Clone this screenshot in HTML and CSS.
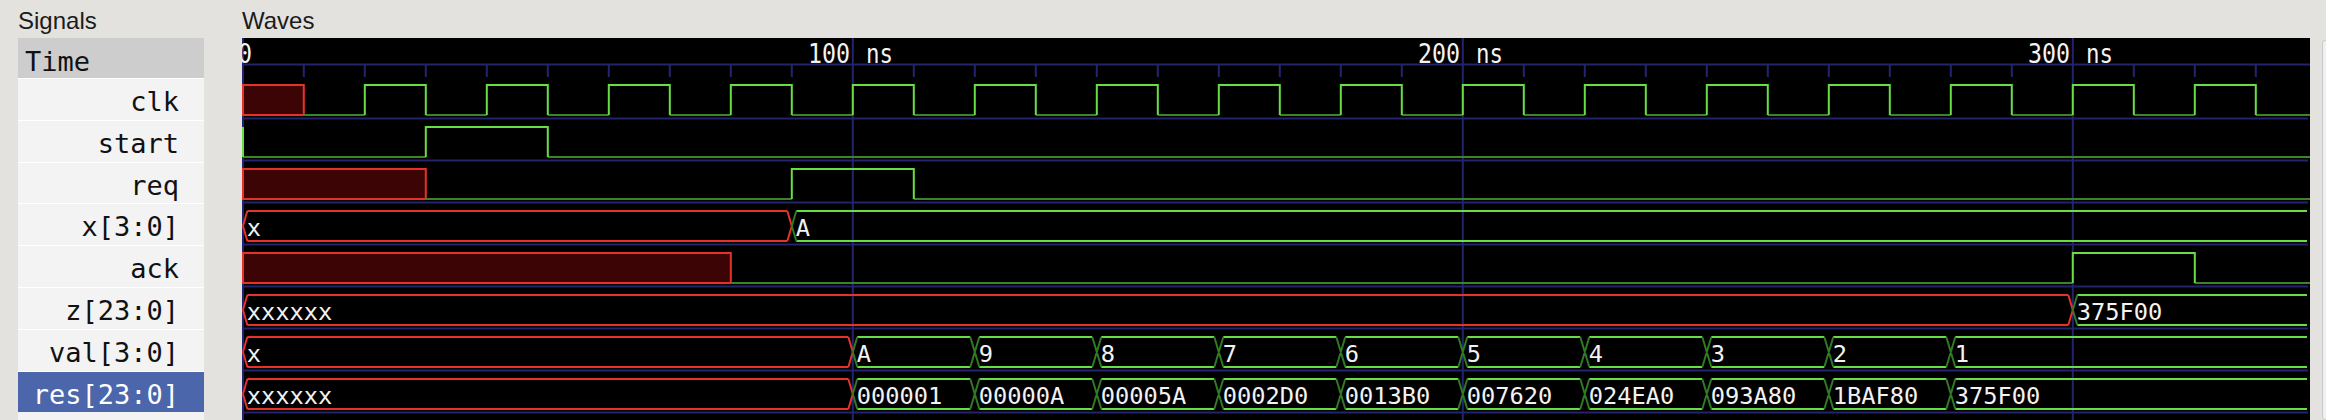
FILE: index.html
```html
<!DOCTYPE html>
<html lang="en">
<head>
<meta charset="utf-8">
<title>Waves</title>
<link rel="stylesheet" href="styles.css">
</head>
<body>
<div class="app">
  <section class="signals">
    <div class="pane-title">Signals</div>
    <div class="siglist">
      <div class="sig sig-time">Time</div>
      <div class="sig">clk</div>
      <div class="sig">start</div>
      <div class="sig">req</div>
      <div class="sig">x[3:0]</div>
      <div class="sig">ack</div>
      <div class="sig">z[23:0]</div>
      <div class="sig">val[3:0]</div>
      <div class="sig sig-selected">res[23:0]</div>
    </div>
  </section>
  <section class="waves">
    <div class="pane-title">Waves</div>
    <svg class="wavecanvas" viewBox="0 0 2068 382" width="2068" height="382" xmlns="http://www.w3.org/2000/svg">
      <defs>
        <g id="steps">
          <path class="red" d="M5.3 47H606.3M5.3 77H606.3M1 62L5.3 47M1 62L5.3 77M606.3 47L610.8 62M606.3 77L610.8 62"/>
          <path class="hi" d="M615.3 47H728.3M615.3 77H728.3M737.3 47H850.3M737.3 77H850.3M859.3 47H972.3M859.3 77H972.3M981.3 47H1094.3M981.3 77H1094.3M1103.3 47H1216.3M1103.3 77H1216.3M1225.3 47H1338.3M1225.3 77H1338.3M1347.3 47H1460.3M1347.3 77H1460.3M1469.3 47H1582.3M1469.3 77H1582.3M1591.3 47H1704.3M1591.3 77H1704.3M1713.3 47H2065M1713.3 77H2065"/>
          <path class="tr" d="M610.8 62L615.3 47M610.8 62L615.3 77M728.3 47L737.3 77M728.3 77L737.3 47M850.3 47L859.3 77M850.3 77L859.3 47M972.3 47L981.3 77M972.3 77L981.3 47M1094.3 47L1103.3 77M1094.3 77L1103.3 47M1216.3 47L1225.3 77M1216.3 77L1225.3 47M1338.3 47L1347.3 77M1338.3 77L1347.3 47M1460.3 47L1469.3 77M1460.3 77L1469.3 47M1582.3 47L1591.3 77M1582.3 77L1591.3 47M1704.3 47L1713.3 77M1704.3 77L1713.3 47"/>
        </g>
      </defs>

      <g class="grid">
        <path d="M0 26.5H2068"/>
        <path d="M0 80.5H2066M0 122.5H2066M0 164.5H2066M0 206.5H2066M0 248.5H2066M0 290.5H2066M0 332.5H2066M0 374.5H2066"/>
        <path d="M1 0V382M610.8 0V382M1220.8 0V382M1830.8 0V382"/>
        <path d="M61.8 26V39M122.8 26V39M183.8 26V39M244.8 26V39M305.8 26V39M366.8 26V39M427.8 26V39M488.8 26V39M549.8 26V39M671.8 26V39M732.8 26V39M793.8 26V39M854.8 26V39M915.8 26V39M976.8 26V39M1037.8 26V39M1098.8 26V39M1159.8 26V39M1281.8 26V39M1342.8 26V39M1403.8 26V39M1464.8 26V39M1525.8 26V39M1586.8 26V39M1647.8 26V39M1708.8 26V39M1769.8 26V39M1891.8 26V39M1952.8 26V39M2013.8 26V39"/>
      </g>

      <g class="ruler">
        <text x="-4" y="24.5" textLength="14" lengthAdjust="spacingAndGlyphs">0</text>
        <text x="566" y="24.5" textLength="42" lengthAdjust="spacingAndGlyphs">100</text>
        <text x="624" y="24.5" textLength="27" lengthAdjust="spacingAndGlyphs">ns</text>
        <text x="1176" y="24.5" textLength="42" lengthAdjust="spacingAndGlyphs">200</text>
        <text x="1234" y="24.5" textLength="27" lengthAdjust="spacingAndGlyphs">ns</text>
        <text x="1786" y="24.5" textLength="42" lengthAdjust="spacingAndGlyphs">300</text>
        <text x="1844" y="24.5" textLength="27" lengthAdjust="spacingAndGlyphs">ns</text>
      </g>

      <!-- clk -->
      <g>
        <rect class="xbox" x="1" y="47" width="60.8" height="30"/>
        <path class="lo clk-lo" d="M61.8 77H2068"/>
        <path class="hi" d="M122.8 77V47H183.8V77M244.8 77V47H305.8V77M366.8 77V47H427.8V77M488.8 77V47H549.8V77M610.8 77V47H671.8V77M732.8 77V47H793.8V77M854.8 77V47H915.8V77M976.8 77V47H1037.8V77M1098.8 77V47H1159.8V77M1220.8 77V47H1281.8V77M1342.8 77V47H1403.8V77M1464.8 77V47H1525.8V77M1586.8 77V47H1647.8V77M1708.8 77V47H1769.8V77M1830.8 77V47H1891.8V77M1952.8 77V47H2013.8V77"/>
      </g>

      <!-- start -->
      <g transform="translate(0 42)">
        <path class="lo" d="M1 77H183.8M305.8 77H2068"/>
        <path class="hi" d="M1 47V77M183.8 77V47H305.8V77"/>
      </g>

      <!-- req -->
      <g transform="translate(0 84)">
        <rect class="xbox" x="1" y="47" width="182.8" height="30"/>
        <path class="lo" d="M183.8 77H549.8M671.8 77H2068"/>
        <path class="hi" d="M549.8 77V47H671.8V77"/>
      </g>

      <!-- x[3:0] -->
      <g transform="translate(0 126)">
        <path class="red" d="M5.3 47H545.3M5.3 77H545.3M1 62L5.3 47M1 62L5.3 77M545.3 47L549.8 62M545.3 77L549.8 62"/>
        <path class="hi" d="M554.3 47H2065M554.3 77H2065"/>
        <path class="tr" d="M549.8 62L554.3 47M549.8 62L554.3 77"/>
        <text class="val" x="4.8" y="71.5">x</text>
        <text class="val" x="553.8" y="71.5">A</text>
      </g>

      <!-- ack -->
      <g transform="translate(0 168)">
        <rect class="xbox" x="1" y="47" width="487.8" height="30"/>
        <path class="lo" d="M488.8 77H1830.8M1952.8 77H2068"/>
        <path class="hi" d="M1830.8 77V47H1952.8V77"/>
      </g>

      <!-- z[23:0] -->
      <g transform="translate(0 210)">
        <path class="red" d="M5.3 47H1826.3M5.3 77H1826.3M1 62L5.3 47M1 62L5.3 77M1826.3 47L1830.8 62M1826.3 77L1830.8 62"/>
        <path class="hi" d="M1835.3 47H2065M1835.3 77H2065"/>
        <path class="tr" d="M1830.8 62L1835.3 47M1830.8 62L1835.3 77"/>
        <text class="val" x="4.8" y="71.5">xxxxxx</text>
        <text class="val" x="1834.8" y="71.5">375F00</text>
      </g>

      <!-- val[3:0] -->
      <g transform="translate(0 252)">
        <use href="#steps"/>
        <text class="val" x="4.8" y="71.5">x</text>
        <text class="val" x="614.8" y="71.5">A</text>
        <text class="val" x="736.8" y="71.5">9</text>
        <text class="val" x="858.8" y="71.5">8</text>
        <text class="val" x="980.8" y="71.5">7</text>
        <text class="val" x="1102.8" y="71.5">6</text>
        <text class="val" x="1224.8" y="71.5">5</text>
        <text class="val" x="1346.8" y="71.5">4</text>
        <text class="val" x="1468.8" y="71.5">3</text>
        <text class="val" x="1590.8" y="71.5">2</text>
        <text class="val" x="1712.8" y="71.5">1</text>
      </g>

      <!-- res[23:0] -->
      <g transform="translate(0 294)">
        <use href="#steps"/>
        <text class="val" x="4.8" y="71.5">xxxxxx</text>
        <text class="val" x="614.8" y="71.5">000001</text>
        <text class="val" x="736.8" y="71.5">00000A</text>
        <text class="val" x="858.8" y="71.5">00005A</text>
        <text class="val" x="980.8" y="71.5">0002D0</text>
        <text class="val" x="1102.8" y="71.5">0013B0</text>
        <text class="val" x="1224.8" y="71.5">007620</text>
        <text class="val" x="1346.8" y="71.5">024EA0</text>
        <text class="val" x="1468.8" y="71.5">093A80</text>
        <text class="val" x="1590.8" y="71.5">1BAF80</text>
        <text class="val" x="1712.8" y="71.5">375F00</text>
      </g>
    </svg>
  </section>
  <div class="vscroll"></div>
</div>
</body>
</html>
```

FILE: styles.css
```css
html, body {
  margin: 0;
  padding: 0;
}

body {
  background: #e3e2de;
  overflow: hidden;
  width: 2326px;
  height: 420px;
}

.app {
  display: flex;
  height: 420px;
  padding-left: 18px;
  overflow: hidden;
}

.signals {
  flex: 0 0 186px;
  display: flex;
  flex-direction: column;
}

.pane-title {
  height: 38px;
  box-sizing: border-box;
  padding-top: 3px;
  line-height: 35px;
  font-family: "Liberation Sans", Arial, sans-serif;
  font-size: 24px;
  color: #1b1b1b;
  white-space: nowrap;
}

.siglist {
  flex: 1;
  background: #f3f3f3;
  font-family: "DejaVu Sans Mono", monospace;
  font-size: 27px;
  color: #111;
}

.sig {
  height: 41.8px;
  box-sizing: border-box;
  border-top: 1.5px solid #ffffff;
  padding: 3px 25px 0 0;
  line-height: 40.3px;
  text-align: right;
  white-space: nowrap;
  overflow: hidden;
}

.sig-time {
  height: 40px;
  border-top: 0;
  padding: 3.5px 0 0 7px;
  line-height: 40px;
  text-align: left;
  background: #cdcdcd;
}

.sig-selected {
  background: #4b66aa;
  color: #ffffff;
}

.waves {
  flex: 0 0 2068px;
  margin-left: 38px;
  display: flex;
  flex-direction: column;
}

.wavecanvas {
  display: block;
  width: 2068px;
  height: 382px;
  background: #000000;
  overflow: hidden;
}

.vscroll {
  flex: 0 0 30px;
  margin-left: 12px;
  margin-top: 40px;
  background: #f0f0f0;
  border: 1px solid #c9c9c9;
  border-radius: 3px;
}

/* waveform strokes */
.grid path {
  fill: none;
  stroke: #23236e;
  stroke-width: 2;
}

.ruler text {
  font-family: "DejaVu Sans Mono", monospace;
  font-size: 26px;
  fill: #f4f4f4;
}

.hi {
  fill: none;
  stroke: #67de45;
  stroke-width: 2;
}

.lo {
  fill: none;
  stroke: #3c8228;
  stroke-width: 2;
}

.clk-lo {
  stroke-dasharray: 61 61;
}

.tr {
  fill: none;
  stroke: #2f7a22;
  stroke-width: 2;
}

.red {
  fill: none;
  stroke: #e63228;
  stroke-width: 2;
}

.xbox {
  fill: #3c0404;
  stroke: #e63228;
  stroke-width: 2;
}

.val {
  font-family: "DejaVu Sans Mono", monospace;
  font-size: 23.7px;
  fill: #f2f2f2;
}
```
